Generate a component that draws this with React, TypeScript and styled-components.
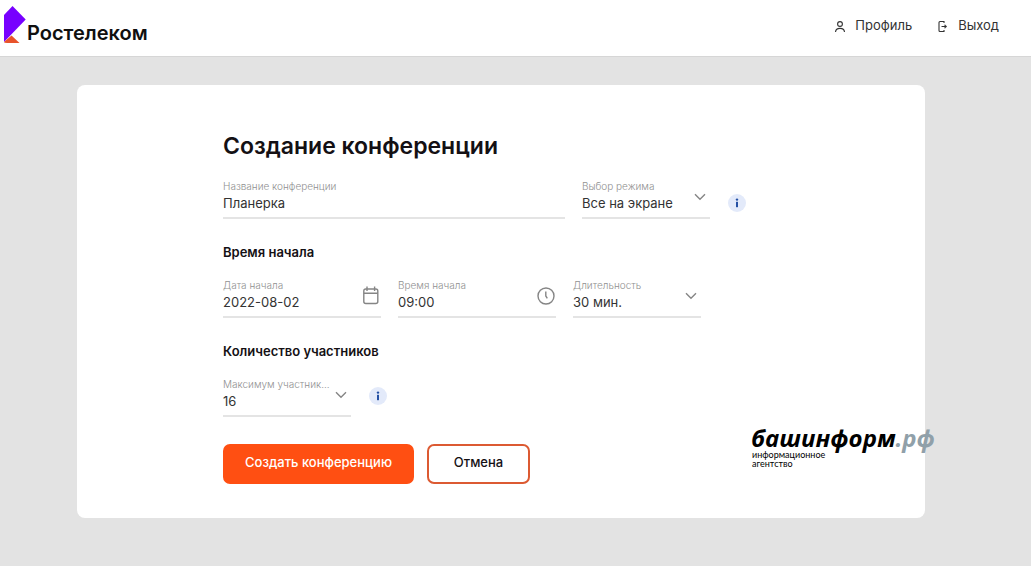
import React from "react";
import styled, { createGlobalStyle } from "styled-components";

const GlobalStyle = createGlobalStyle`
  *, *::before, *::after { box-sizing: border-box; }
  body {
    margin: 0;
    background: #e3e3e3;
    color: #141014;
    font-family: Inter, Roboto, "Liberation Sans", sans-serif;
  }
  button, input, select { font: inherit; color: inherit; }
`;

const Header = styled.header`
  display: flex;
  align-items: flex-start;
  justify-content: space-between;
  height: 57px;
  padding: 6px 32px 0 4px;
  background: #ffffff;
  border-bottom: 1px solid #d6d6d6;
`;

const Brand = styled.a`
  display: flex;
  align-items: flex-start;
  gap: 1px;
  color: #101010;
  text-decoration: none;
`;

const BrandName = styled.span`
  padding-top: 15px;
  font-size: 20px;
  line-height: 24px;
  font-weight: 600;
`;

const Nav = styled.nav`
  display: flex;
  gap: 25px;
  padding-top: 9px;
`;

const NavLink = styled.a`
  display: flex;
  align-items: center;
  gap: 9px;
  color: #333333;
  font-size: 13px;
  line-height: 20px;
  text-decoration: none;

  svg { margin-top: 2px; }
`;

const Main = styled.main`
  padding: 28px 106px 48px 77px;
`;

const Card = styled.section`
  position: relative;
  padding: 45px 146px 34px;
  background: #ffffff;
  border-radius: 8px;
`;

const Title = styled.h1`
  margin: 0 0 18px;
  font-size: 23px;
  line-height: 32px;
  font-weight: 600;
  white-space: nowrap;
`;

const GroupTitle = styled.h2`
  margin: 23px 0 17px;
  font-size: 13px;
  line-height: 20px;
  font-weight: 600;
`;

const Row = styled.div`
  display: flex;
  align-items: flex-end;
  gap: 17px;
`;

const FieldBox = styled.div<{ $width: number }>`
  position: relative;
  flex: 0 1 ${(p) => p.$width}px;
  min-width: 0;
  padding-bottom: 4px;
  border-bottom: 2px solid #e4e4e4;
`;

const Label = styled.label`
  display: block;
  color: #909090;
  font-size: 10px;
  font-weight: 300;
  line-height: 13px;
  white-space: nowrap;
`;

const Input = styled.input`
  display: block;
  width: 100%;
  height: 20px;
  padding: 0;
  border: 0;
  outline: 0;
  background: transparent;
  color: #333333;
  font-size: 13px;
  line-height: 20px;
`;

const Select = styled.select`
  display: block;
  width: 100%;
  height: 20px;
  padding: 0;
  border: 0;
  outline: 0;
  appearance: none;
  background: transparent;
  color: #333333;
  font-size: 13px;
  line-height: 20px;
`;

const FieldIcon = styled.span<{ $right: number }>`
  position: absolute;
  top: 0;
  bottom: 4px;
  right: ${(p) => p.$right}px;
  display: flex;
  align-items: center;
  color: #858585;
  pointer-events: none;
`;

const InfoButton = styled.button<{ $lift: number }>`
  width: 18px;
  height: 18px;
  margin: 0 0 ${(p) => p.$lift}px 1px;
  padding: 0;
  border: 0;
  border-radius: 50%;
  background: #e3eafa;
  color: #2450a4;

  svg { display: block; }
`;

const Actions = styled.div`
  display: flex;
  gap: 13px;
  margin-top: 27px;
`;

const Button = styled.button<{ $primary?: boolean }>`
  height: 40px;
  padding: 0 ${(p) => (p.$primary ? 20 : 24)}px 4px;
  min-width: ${(p) => (p.$primary ? 191 : 103)}px;
  border: 2px solid ${(p) => (p.$primary ? "#ff4f12" : "#dc5a32")};
  border-radius: 7px;
  background: ${(p) => (p.$primary ? "#ff4f12" : "#ffffff")};
  color: ${(p) => (p.$primary ? "#ffffff" : "#141014")};
  font-size: 13px;
  font-weight: 500;
  white-space: nowrap;
`;

const Watermark = styled.aside`
  position: absolute;
  right: -7px;
  bottom: 50px;
  width: 181px;
  color: #000000;
  font-family: "Open Sans", "Noto Sans", sans-serif;
`;

const WatermarkName = styled.div`
  font-size: 24px;
  line-height: 24px;
  font-style: italic;
  font-weight: 700;
  white-space: nowrap;

  span { color: #90a0a9; }
`;

const WatermarkNote = styled.div`
  padding-left: 1px;
  font-family: Lato, "Open Sans", sans-serif;
  font-size: 9px;
  line-height: 9px;
`;

const Chevron = () => (
  <svg width="12" height="8" viewBox="0 0 12 8" fill="none" stroke="currentColor" strokeWidth="1.4">
    <path d="M1 1.2 6 6.2 11 1.2" />
  </svg>
);

const Calendar = () => (
  <svg width="18" height="20" viewBox="0 0 18 20" fill="none" stroke="currentColor" strokeWidth="1.4">
    <rect x="1.8" y="3" width="14" height="14.5" rx="2" />
    <path d="M1.8 7.2h14M5 .5v4.5M12.6 .5v4.5" />
  </svg>
);

const Clock = () => (
  <svg width="18" height="18" viewBox="0 0 18 18" fill="none" stroke="currentColor" strokeWidth="1.4">
    <circle cx="9" cy="9" r="8" />
    <path d="M8.8 4.5V9l1.5 2.3" />
  </svg>
);

const Info = ({ label, lift }: { label: string; lift: number }) => (
  <InfoButton type="button" aria-label={label} $lift={lift}>
    <svg width="18" height="18" viewBox="0 0 18 18" fill="currentColor">
      <circle cx="9" cy="5.6" r="1.2" />
      <rect x="8" y="7.8" width="2" height="5.4" />
    </svg>
  </InfoButton>
);

const Logo = () => (
  <svg width="22" height="38" viewBox="0 0 22 38">
    <path d="M0 9 8.5 0 21.7 13.5 0 36Z" fill="#7700ff" />
    <path d="M7.5 29.5 15.5 37H3Q0 37 0 36Z" fill="#e8532b" />
  </svg>
);

const Person = () => (
  <svg width="12" height="13" viewBox="0 0 12 13" fill="none" stroke="currentColor" strokeWidth="1.1">
    <circle cx="6" cy="4" r="2.4" />
    <path d="M1.5 12Q1.8 8.4 6 8.4T10.5 12" />
  </svg>
);

const Exit = () => (
  <svg width="12" height="13" viewBox="0 0 12 13" fill="none" stroke="currentColor" strokeWidth="1.1">
    <path d="M7 3V1.5H3Q2 1.5 2 2.5V10.5Q2 11.5 3 11.5H7V10M4.5 6.5H9" />
    <path d="M7.8 4.7 9.8 6.5 7.8 8.3Z" fill="currentColor" strokeWidth="0.5" />
  </svg>
);

type FieldProps = {
  id: string;
  label: string;
  value: string;
  width: number;
  icon?: React.ReactNode;
};

const TextField = ({ id, label, value, width, icon }: FieldProps) => (
  <FieldBox $width={width}>
    <Label htmlFor={id}>{label}</Label>
    <Input id={id} type="text" defaultValue={value} />
    {icon && <FieldIcon $right={1}>{icon}</FieldIcon>}
  </FieldBox>
);

const SelectField = ({ id, label, value, width }: FieldProps) => (
  <FieldBox $width={width}>
    <Label htmlFor={id}>{label}</Label>
    <Select id={id} defaultValue={value}>
      <option>{value}</option>
    </Select>
    <FieldIcon $right={4}>
      <Chevron />
    </FieldIcon>
  </FieldBox>
);

export default function App() {
  return (
    <>
      <GlobalStyle />
      <Header>
        <Brand href="#">
          <Logo />
          <BrandName>Ростелеком</BrandName>
        </Brand>
        <Nav>
          <NavLink href="#profile">
            <Person />
            Профиль
          </NavLink>
          <NavLink href="#logout">
            <Exit />
            Выход
          </NavLink>
        </Nav>
      </Header>
      <Main>
        <Card>
          <form onSubmit={(e) => e.preventDefault()}>
            <Title>Создание конференции</Title>
            <Row>
              <TextField id="name" label="Название конференции" value="Планерка" width={342} />
              <SelectField id="mode" label="Выбор режима" value="Все на экране" width={128} />
              <Info label="О режимах" lift={7} />
            </Row>
            <GroupTitle>Время начала</GroupTitle>
            <Row>
              <TextField id="date" label="Дата начала" value="2022-08-02" width={158} icon={<Calendar />} />
              <TextField id="time" label="Время начала" value="09:00" width={158} icon={<Clock />} />
              <SelectField id="duration" label="Длительность" value="30 мин." width={128} />
            </Row>
            <GroupTitle>Количество участников</GroupTitle>
            <Row>
              <SelectField id="limit" label="Максимум участник..." value="16" width={128} />
              <Info label="О количестве участников" lift={12} />
            </Row>
            <Actions>
              <Button type="submit" $primary>Создать конференцию</Button>
              <Button type="button">Отмена</Button>
            </Actions>
          </form>
          <Watermark>
            <WatermarkName>башинформ<span>.рф</span></WatermarkName>
            <WatermarkNote>информационное<br />агентство</WatermarkNote>
          </Watermark>
        </Card>
      </Main>
    </>
  );
}
